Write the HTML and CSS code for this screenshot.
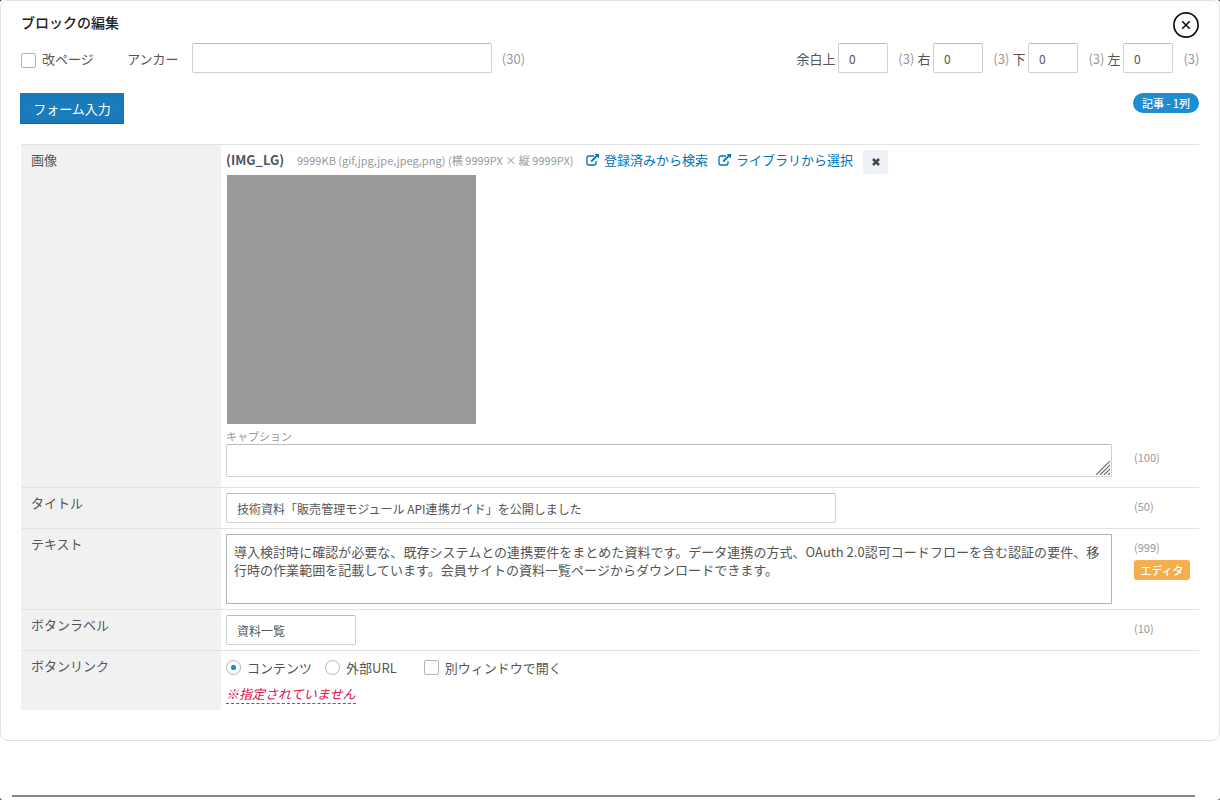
FILE: index.html
```html
<!doctype html>
<html lang="ja">

<head>
  <meta charset="utf-8">
  <meta name="viewport" content="width=device-width, initial-scale=1">
  <title>ブロックの編集</title>
  <link rel="stylesheet" href="styles.css">
</head>

<body>
  <div class="modal">
    <form class="panel" onsubmit="return false">
      <div class="panel-head">
        <h1>ブロックの編集</h1>
        <button type="button" class="close" aria-label="閉じる">
          <svg width="26" height="26" viewBox="0 0 26 26" fill="none" stroke="#111">
            <circle cx="13" cy="13" r="12.1" stroke-width="1.7"/>
            <path d="M9.2 9.2l7.6 7.6M16.8 9.2l-7.6 7.6" stroke-width="1.6"/>
          </svg>
        </button>
      </div>

      <div class="options">
        <label class="check"><input type="checkbox"><span>改ページ</span></label>
        <label class="anchor"><span>アンカー</span> <input type="text" class="field"></label>
        <span class="limit">(30)</span>
        <div class="margins">
          <label><span>余白上</span> <input type="text" class="field num" value="0"></label><span class="max">(3)</span>
          <label><span>右</span> <input type="text" class="field num" value="0"></label><span class="max">(3)</span>
          <label><span>下</span> <input type="text" class="field num" value="0"></label><span class="max">(3)</span>
          <label><span>左</span> <input type="text" class="field num" value="0"></label><span class="max">(3)</span>
        </div>
      </div>

      <div class="mode">
        <button type="button" class="primary">フォーム入力</button>
        <span class="badge">記事 - 1列</span>
      </div>

      <div class="rows">
        <div class="row row-image">
          <div class="name">画像</div>
          <div class="body">
            <div class="image-head">
              <strong>(IMG_LG)</strong>
              <span class="spec">9999KB (gif,jpg,jpe,jpeg,png) (横 9999PX × 縦 9999PX)</span>
              <a href="#"><svg class="ext" viewBox="0 0 14 12"><path d="M8 2H3Q1 2 1 4v5q0 2 2 2h5q2 0 2-2V7" fill="none" stroke="currentColor" stroke-width="1.3"/><path d="M5.2 7.5L11 1.7" stroke="currentColor" stroke-width="1.8"/><path d="M8.5 0H13v4.5z" fill="currentColor"/></svg>登録済みから検索</a>
              <a href="#"><svg class="ext" viewBox="0 0 14 12"><path d="M8 2H3Q1 2 1 4v5q0 2 2 2h5q2 0 2-2V7" fill="none" stroke="currentColor" stroke-width="1.3"/><path d="M5.2 7.5L11 1.7" stroke="currentColor" stroke-width="1.8"/><path d="M8.5 0H13v4.5z" fill="currentColor"/></svg>ライブラリから選択</a>
              <button type="button" class="clear" aria-label="クリア">
                <svg width="8" height="8" viewBox="0 0 8 8"><path d="M1 1l6 6M7 1L1 7" stroke="#444" stroke-width="2.5"/></svg>
              </button>
            </div>
            <div class="thumb"></div>
            <div class="caption-label">キャプション</div>
            <div class="caption">
              <textarea class="field"></textarea>
              <svg class="grip" width="14" height="14" viewBox="0 0 14 14"><path d="M0 14L14 0M4 14L14 4M8 14l6-6M12 14l2-2" stroke="#666" stroke-width="1.1"/></svg>
            </div>
          </div>
          <div class="side">(100)</div>
        </div>

        <div class="row">
          <div class="name">タイトル</div>
          <div class="body"><input type="text" class="field title" value="技術資料「販売管理モジュール API連携ガイド」を公開しました"></div>
          <div class="side">(50)</div>
        </div>

        <div class="row row-text">
          <div class="name">テキスト</div>
          <div class="body"><textarea class="text">導入検討時に確認が必要な、既存システムとの連携要件をまとめた資料です。データ連携の方式、OAuth 2.0認可コードフローを含む認証の要件、移行時の作業範囲を記載しています。会員サイトの資料一覧ページからダウンロードできます。</textarea></div>
          <div class="side">(999)<br><button type="button" class="editor">エディタ</button></div>
        </div>

        <div class="row">
          <div class="name">ボタンラベル</div>
          <div class="body"><input type="text" class="field label" value="資料一覧"></div>
          <div class="side">(10)</div>
        </div>

        <div class="row row-link">
          <div class="name">ボタンリンク</div>
          <div class="body">
            <div class="choices">
              <label class="check"><input type="radio" name="link" checked>コンテンツ</label>
              <label class="check"><input type="radio" name="link">外部URL</label>
              <label class="check blank"><input type="checkbox">別ウィンドウで開く</label>
            </div>
            <a href="#" class="unset">※指定されていません</a>
          </div>
        </div>
      </div>
    </form>
    <div class="divider"></div>
  </div>
</body>

</html>
```
FILE: styles.css
```css
* {
  box-sizing: border-box;
}

body {
  margin: 0;
  background: #444;
  color: #555;
  font: 13px/20px "Noto Sans CJK JP", sans-serif;
}

input,
textarea,
button {
  font-family: inherit;
  color: inherit;
  margin: 0;
}

button {
  border: none;
  padding: 0;
}

a {
  color: #0073b9;
  text-decoration: none;
}

.modal {
  height: 800px;
  background: #fff;
  border-radius: 3px;
  overflow: hidden;
}

.panel {
  height: 741px;
  padding: 11px 20px 0;
  border: 1px solid #e2e2e2;
  border-radius: 8px;
}

.panel-head {
  display: flex;
  justify-content: space-between;
  height: 31px;
}

h1 {
  margin: 0;
  font-size: 14px;
  line-height: 20px;
  font-weight: 500;
  color: #222;
}

.close {
  width: 26px;
  height: 26px;
  background: none;
}

.close svg {
  display: block;
}

.options {
  display: flex;
  align-items: center;
  height: 30px;
}

.options span {
  padding-top: 2px;
}

.check {
  display: flex;
  align-items: center;
  gap: 6px;
}

.check input {
  appearance: none;
  width: 15px;
  height: 15px;
  border: 1px solid #b4b4b4;
  border-radius: 2px;
  background: #fff;
}

.options .check input {
  margin-top: 4px;
}

.check input[type="radio"] {
  border-radius: 50%;
}

.check input[type="radio"]:checked {
  background: radial-gradient(circle, #1e8cd2 2.2px, transparent 3px);
}

.field {
  height: 30px;
  padding: 1px 10px 0;
  border: 1px solid #d0d0d0;
  border-top-color: #bbb;
  border-radius: 2px;
  background: #fff;
  font-size: 12px;
}

.anchor {
  display: flex;
  align-items: center;
  gap: 13.6px;
  margin-left: 33.4px;
}

.anchor .field {
  width: 300px;
}

.limit {
  margin-left: 9.6px;
  color: #999;
}

.margins {
  display: flex;
  align-items: center;
  margin-left: auto;
}

.margins label {
  display: flex;
  align-items: center;
  gap: 2.5px;
}

.margins .max {
  width: 29.5px;
  padding-left: 10.4px;
  color: #999;
}

.margins .max:last-child {
  width: 26px;
}

.num {
  width: 50px;
}

.mode {
  display: flex;
  justify-content: space-between;
  align-items: flex-start;
  height: 51px;
  margin: 20px 0 0 -1px;
}

.primary {
  width: 104px;
  height: 31px;
  background: #1b7cbc;
  box-shadow: inset 0 0 6px #1470ad, inset 0 -1px 0 #0c659f;
  color: #fff;
  font-size: 13px;
  border-radius: 1px;
}

.badge {
  width: 66px;
  height: 20px;
  border-radius: 10px;
  background: #1e8cd2;
  color: #fff;
  font-size: 11px;
  font-weight: 500;
  line-height: 21px;
  text-align: center;
}

.row {
  display: flex;
  height: 41px;
  border-top: 1px solid #e2e2e2;
}

.row-image {
  height: 343px;
}

.row-text {
  height: 81px;
}

.row-link {
  height: 60px;
}

.name {
  width: 200px;
  padding: 5px 10px;
  background: #f1f1f1;
}

.body {
  width: 891px;
  padding: 5px 0 0 5px;
}

.side {
  padding: 8px 0 0 22px;
  color: #999;
  font-size: 11px;
}

.row-image .side {
  padding-top: 302px;
}

.image-head {
  display: flex;
  height: 25px;
  white-space: nowrap;
}

.image-head strong {
  width: 71px;
}

.spec {
  width: 289px;
  color: #999;
  font-size: 11px;
  line-height: 20px;
  letter-spacing: 0.02px;
}

.image-head a {
  margin-right: 10px;
}

.ext {
  width: 14px;
  height: 12px;
  margin-right: 4px;
  vertical-align: -1px;
}

.clear {
  display: flex;
  align-items: center;
  justify-content: center;
  width: 25px;
  height: 24px;
  border-radius: 2px;
  background: #eef1f6;
}

.thumb {
  width: 249px;
  height: 249px;
  margin-left: 1px;
  background: #999;
}

.caption-label {
  height: 20px;
  line-height: 24px;
  color: #999;
  font-size: 11px;
}

.caption {
  position: relative;
  width: 886px;
  height: 33px;
}

.caption textarea {
  display: block;
  width: 100%;
  height: 100%;
  resize: none;
}

.grip {
  position: absolute;
  right: 2px;
  bottom: 2px;
}

.title {
  width: 610px;
  padding-top: 0;
  letter-spacing: 0.02px;
}

.label {
  width: 130px;
}

.text {
  display: block;
  width: 886px;
  height: 70px;
  padding: 8px 7px;
  border: 1px solid #b4b4b4;
  background: #fff;
  font-size: 13px;
  line-height: 18px;
  letter-spacing: 0.03px;
  resize: none;
}

.editor {
  display: block;
  width: 56px;
  height: 20px;
  margin-top: 3px;
  border-radius: 3px;
  background: #f4ae4e;
  color: #fff;
  font-size: 11px;
  font-weight: 500;
  line-height: 20px;
}

.choices {
  display: flex;
  height: 23px;
  gap: 13px;
}

.blank {
  margin-left: 14px;
}

.unset {
  display: inline-block;
  height: 20px;
  margin-top: 5px;
  line-height: 19px;
  letter-spacing: 0.03px;
  border-bottom: 1px dashed #0080c8;
  color: #dc144f;
  font-style: italic;
}

.divider {
  height: 2px;
  margin: 54px 25px 0 12px;
  background: #868686;
}
```
